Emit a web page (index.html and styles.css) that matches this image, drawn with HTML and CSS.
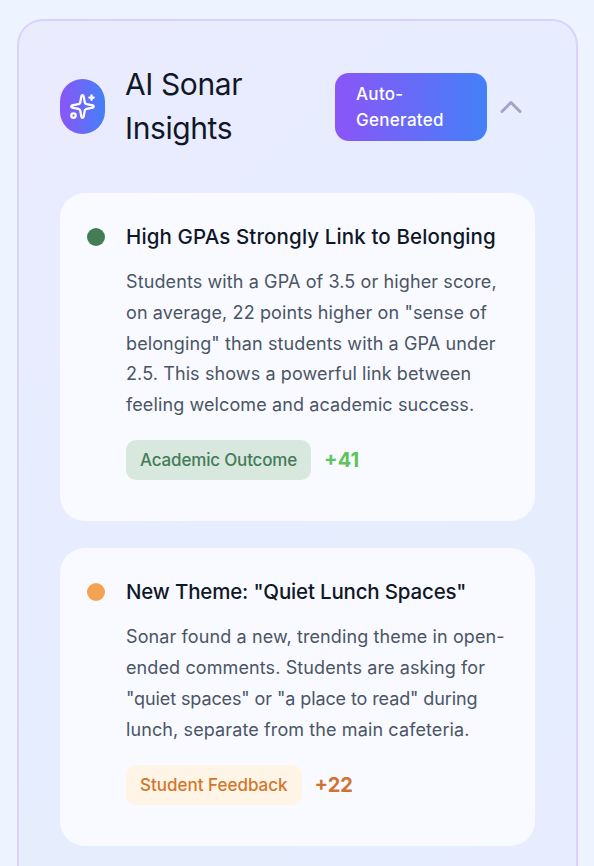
FILE: index.html
```html
<!DOCTYPE html>
<html lang="en">
  <head>
    <meta charset="UTF-8" />
    <meta name="viewport" content="width=device-width, initial-scale=1.0" />
    <title>AI Sonar Insights</title>
    <link rel="stylesheet" href="styles.css">
  </head>

  <body>
    <section class="panel">
      <header class="panel-header">
        <div class="panel-icon">
          <svg width="27" height="27" viewBox="0 0 24 24" fill="none" stroke="currentColor" stroke-width="2" stroke-linecap="round" stroke-linejoin="round">
            <path d="M11.017 2.814a1 1 0 0 1 1.966 0l1.051 5.558a2 2 0 0 0 1.594 1.594l5.558 1.051a1 1 0 0 1 0 1.966l-5.558 1.051a2 2 0 0 0-1.594 1.594l-1.051 5.558a1 1 0 0 1-1.966 0l-1.051-5.558a2 2 0 0 0-1.594-1.594l-5.558-1.051a1 1 0 0 1 0-1.966l5.558-1.051a2 2 0 0 0 1.594-1.594z" />
            <path d="M20 2v4" />
            <path d="M22 4h-4" />
            <circle cx="4" cy="20" r="2" />
          </svg>
        </div>
        <h1 class="panel-title">AI Sonar<br>Insights</h1>
        <span class="badge">Auto-<br>Generated</span>
        <svg class="chevron" width="36" height="36" viewBox="0 0 24 24" fill="none" stroke="currentColor" stroke-width="2" stroke-linecap="round" stroke-linejoin="round">
          <path d="m18 15-6-6-6 6" />
        </svg>
      </header>

      <div class="insights">
        <article class="insight">
          <span class="dot dot-green"></span>
          <div class="insight-body">
            <h2 class="insight-title">High GPAs Strongly Link to Belonging</h2>
            <p class="insight-text">
              Students with a GPA of 3.5 or higher score,<br>
              on average, 22 points higher on "sense of<br>
              belonging" than students with a GPA under<br>
              2.5. This shows a powerful link between<br>
              feeling welcome and academic success.
            </p>
            <div class="insight-footer">
              <span class="tag tag-green">Academic Outcome</span>
              <span class="score score-green">+41</span>
            </div>
          </div>
        </article>

        <article class="insight">
          <span class="dot dot-orange"></span>
          <div class="insight-body">
            <h2 class="insight-title title-theme">New Theme: "Quiet Lunch Spaces"</h2>
            <p class="insight-text">
              Sonar found a new, trending theme in open-<br>
              ended comments. Students are asking for<br>
              <span class="tight">"quiet spaces" or "a place to read" during</span><br>
              lunch, separate from the main cafeteria.
            </p>
            <div class="insight-footer">
              <span class="tag tag-orange">Student Feedback</span>
              <span class="score score-orange">+22</span>
            </div>
          </div>
        </article>
      </div>
    </section>
  </body>
</html>
```

FILE: styles.css
```css
* {
  box-sizing: border-box;
}

body {
  margin: 0;
  padding: 19px 16px 0 17px;
  background-color: #edf4ff;
  font-family: Inter, "Liberation Sans", sans-serif;
  color: #101828;
}

.panel {
  height: 847px;
  padding: 42px 41px 0;
  border: 2px solid #d9d2fd;
  border-bottom: none;
  border-radius: 26px 26px 0 0;
  background: linear-gradient(135deg, #ebebfe, #e7edfe 35%, #e6eefe 70%, #e7edfe);
}

.panel-header {
  display: flex;
  align-items: center;
  height: 87px;
  margin-bottom: 43px;
}

.panel-icon {
  display: flex;
  align-items: center;
  justify-content: center;
  width: 45px;
  height: 55px;
  border-radius: 23px;
  background: linear-gradient(90deg, #8b55f7, #4480f8);
  color: #fff;
}

.panel-title {
  flex: 1;
  margin: 0 0 2px 20px;
  font-size: 30px;
  font-weight: 400;
  letter-spacing: -0.4px;
  line-height: 44px;
  white-space: nowrap;
}

.badge {
  width: 152px;
  height: 68px;
  padding: 8px 21px;
  border-radius: 14px;
  background: linear-gradient(90deg, #8b55f7, #4480f8);
  color: #fff;
  font-size: 17px;
  font-weight: 500;
  letter-spacing: 0.3px;
  line-height: 26px;
}

.chevron {
  margin: 0 6px;
  color: #a6a2c6;
}

.insights {
  display: flex;
  flex-direction: column;
  gap: 27px;
}

.insight {
  display: flex;
  align-items: flex-start;
  gap: 21px;
  padding: 27px 27px 41px;
  border-radius: 25px;
  background-color: #f9faff;
}

.dot {
  flex-shrink: 0;
  width: 18px;
  height: 18px;
  margin-top: 8px;
  border-radius: 50%;
}

.dot-green {
  background-color: #437c56;
}

.dot-orange {
  background-color: #f2a453;
}

.insight-title {
  margin: 0 0 13px;
  font-size: 20.5px;
  font-weight: 500;
  letter-spacing: 0.12px;
  line-height: 34px;
  white-space: nowrap;
}

.title-theme {
  letter-spacing: -0.18px;
}

.insight-text {
  margin: 0 0 19.5px;
  color: #4a5565;
  font-size: 18px;
  letter-spacing: 0.11px;
  line-height: 30.75px;
  white-space: nowrap;
}

.tight {
  letter-spacing: -0.1px;
}

.insight-footer {
  display: flex;
  align-items: center;
  gap: 13px;
}

.tag {
  height: 40px;
  padding: 0 14px;
  border-radius: 10px;
  font-size: 17px;
  font-weight: 500;
  line-height: 40px;
}

.tag-green {
  background-color: #d9e8df;
  color: #437c56;
  letter-spacing: -0.17px;
}

.tag-orange {
  background-color: #fef5e7;
  color: #d4752c;
}

.score {
  font-size: 20px;
  font-weight: 700;
}

.score-green {
  color: #5bc45f;
}

.score-orange {
  color: #cf7430;
}
```
